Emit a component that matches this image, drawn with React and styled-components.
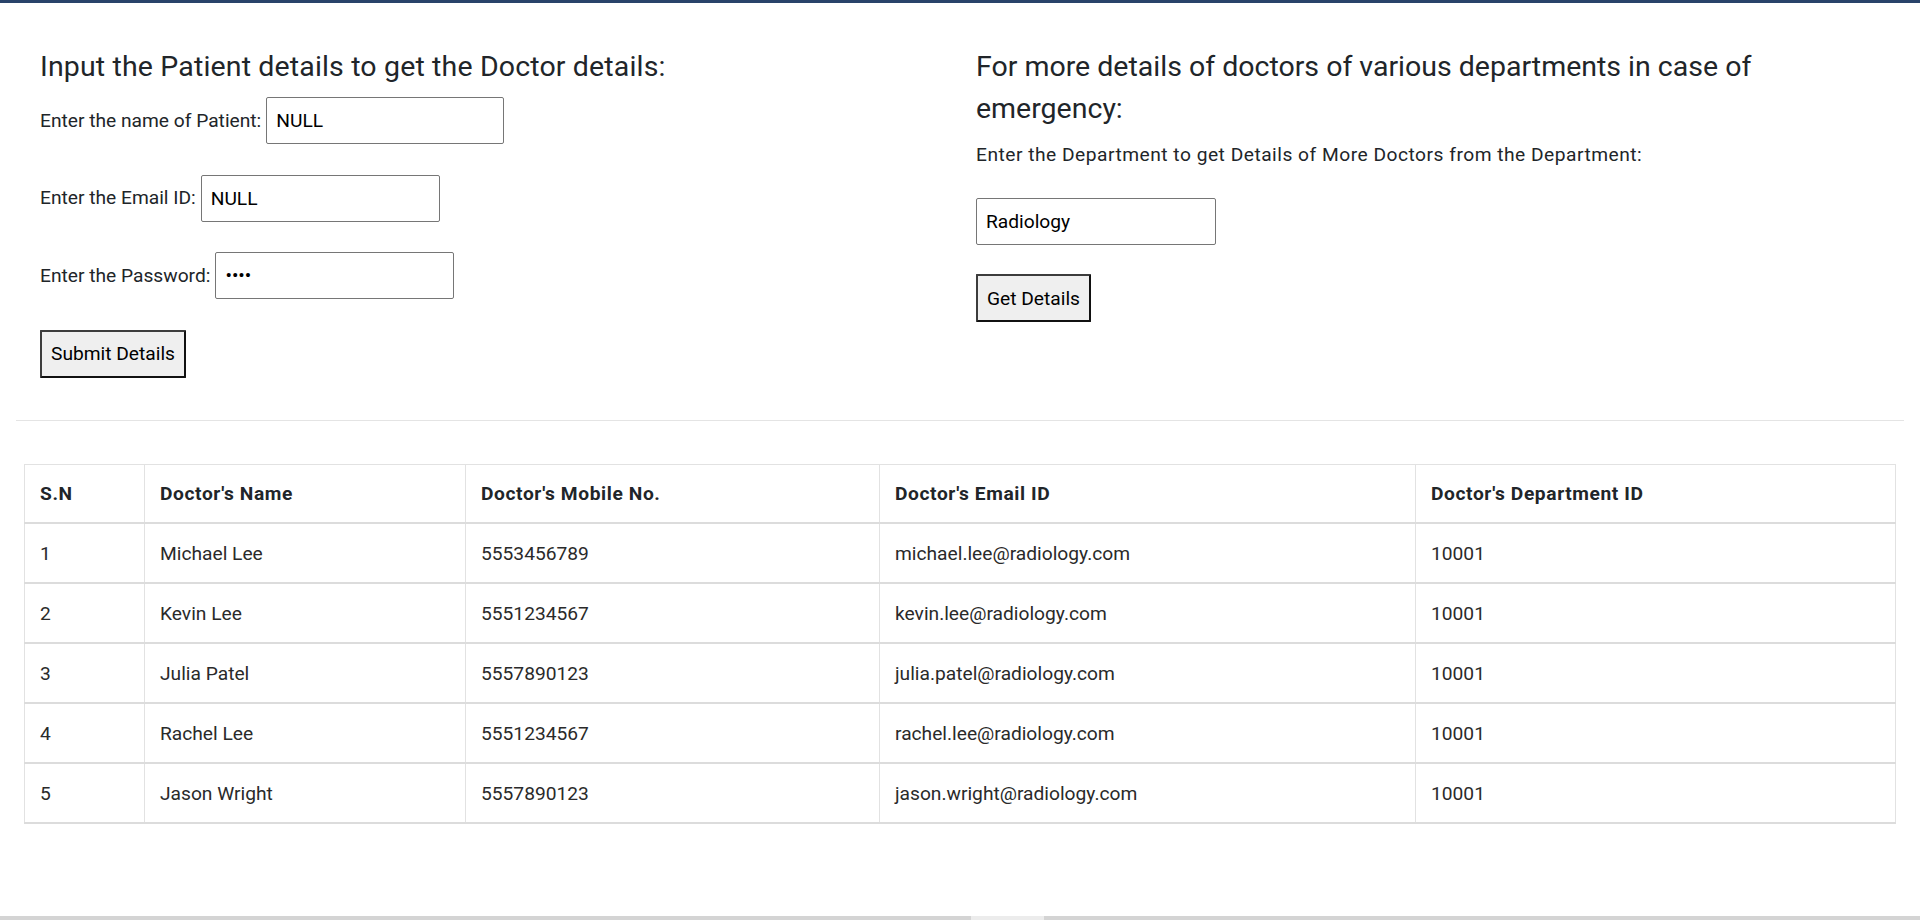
import React from "react";
import styled, { createGlobalStyle } from "styled-components";

const GlobalStyle = createGlobalStyle`
  html, body {
    margin: 0;
    padding: 0;
    background: #fff;
  }
  body {
    font-family: "Segoe UI", Roboto, "Liberation Sans", sans-serif;
    font-size: 19.2px;
    color: #212529;
  }
`;

const doctors = [
  { id: 1, name: "Michael Lee", mobile: "5553456789", email: "michael.lee@radiology.com", dept: "10001" },
  { id: 2, name: "Kevin Lee", mobile: "5551234567", email: "kevin.lee@radiology.com", dept: "10001" },
  { id: 3, name: "Julia Patel", mobile: "5557890123", email: "julia.patel@radiology.com", dept: "10001" },
  { id: 4, name: "Rachel Lee", mobile: "5551234567", email: "rachel.lee@radiology.com", dept: "10001" },
  { id: 5, name: "Jason Wright", mobile: "5557890123", email: "jason.wright@radiology.com", dept: "10001" },
];

const columns = [
  { label: "S.N", width: 120 },
  { label: "Doctor's Name", width: 321 },
  { label: "Doctor's Mobile No.", width: 414 },
  { label: "Doctor's Email ID", width: 536 },
  { label: "Doctor's Department ID" },
];

export default function App() {
  return (
    <>
      <GlobalStyle />
      <Page>
        <Forms>
          <Column $inset={24}>
            <Heading $gap={9} $spacing={0.15}>
              Input the Patient details to get the Doctor details:
            </Heading>
            <FieldList $gap={30.5}>
              <Field>
                Enter the name of Patient:
                <TextInput $w={238} type="text" defaultValue="NULL" />
              </Field>
              <Field>
                Enter the Email ID:
                <TextInput $w={239} type="text" defaultValue="NULL" />
              </Field>
              <Field>
                Enter the Password:
                <TextInput $w={239} type="password" defaultValue="abcd" />
              </Field>
              <Button type="button">Submit Details</Button>
            </FieldList>
          </Column>

          <Column $inset={16}>
            <Heading $gap={10} $spacing={0}>
              For more details of doctors of various departments in case of emergency:
            </Heading>
            <Hint>Enter the Department to get Details of More Doctors from the Department:</Hint>
            <FieldList $gap={29}>
              <TextInput $w={240} type="text" defaultValue="Radiology" />
              <Button type="button">Get Details</Button>
            </FieldList>
          </Column>
        </Forms>

        <Divider />

        <TableWrap>
          <Table>
            <colgroup>
              {columns.map((c) => (
                <col key={c.label} style={c.width ? { width: c.width } : undefined} />
              ))}
            </colgroup>
            <thead>
              <tr>
                {columns.map((c) => (
                  <HeadCell key={c.label}>{c.label}</HeadCell>
                ))}
              </tr>
            </thead>
            <tbody>
              {doctors.map((d) => (
                <tr key={d.id}>
                  <Cell>{d.id}</Cell>
                  <Cell>{d.name}</Cell>
                  <Cell>{d.mobile}</Cell>
                  <Cell>{d.email}</Cell>
                  <Cell>{d.dept}</Cell>
                </tr>
              ))}
            </tbody>
          </Table>
        </TableWrap>

        <ScrollTrack>
          <ScrollThumb />
        </ScrollTrack>
      </Page>
    </>
  );
}

const Page = styled.div`
  box-sizing: border-box;
  min-height: 100vh;
  display: flex;
  flex-direction: column;
  border-top: 3px solid #29436a;
`;

const Forms = styled.section`
  display: grid;
  grid-template-columns: 1fr 1fr;
  padding: 43px 16px 0;
`;

const Column = styled.div`
  display: flex;
  flex-direction: column;
  align-items: flex-start;
  padding-left: ${(p) => p.$inset}px;
`;

const Heading = styled.h3`
  margin: 0 0 ${(p) => p.$gap}px;
  max-width: 880px;
  font-size: 28.5px;
  font-weight: 400;
  line-height: 42px;
  letter-spacing: ${(p) => p.$spacing}px;
  color: #212529;
`;

const Hint = styled.p`
  margin: 0 0 28px;
  line-height: 30px;
  letter-spacing: 0.5px;
`;

const FieldList = styled.div`
  display: flex;
  flex-direction: column;
  align-items: flex-start;
  gap: ${(p) => p.$gap}px;
`;

const Field = styled.label`
  display: flex;
  align-items: center;
  gap: 5px;
  line-height: 30px;
`;

const TextInput = styled.input`
  box-sizing: border-box;
  width: ${(p) => p.$w}px;
  height: 47px;
  padding: 0 9px;
  border: 1px solid #767676;
  border-radius: 2px;
  background: #fff;
  font: inherit;
  color: #000;
  outline: none;
`;

const Button = styled.button`
  box-sizing: border-box;
  height: 48px;
  padding: 0 9px;
  border: 2px solid #111;
  border-top-color: #3c3c3c;
  border-left-color: #3c3c3c;
  border-radius: 1px;
  background: #efefef;
  font: inherit;
  color: #000;
`;

const Divider = styled.hr`
  margin: 42px 16px 0;
  border: 0;
  border-top: 1px solid #e4e4e4;
`;

const TableWrap = styled.div`
  margin: 43px 24px 0;
`;

const Table = styled.table`
  width: 100%;
  table-layout: fixed;
  border-collapse: collapse;
  border: 1px solid #e2e2e2;
`;

const HeadCell = styled.th`
  padding: 14px 15px;
  line-height: 29.5px;
  text-align: left;
  font-weight: 700;
  letter-spacing: 0.6px;
  color: #212529;
  border-left: 1px solid #e2e2e2;
  border-right: 1px solid #e2e2e2;
  border-bottom: 2px solid #dcdcdc;
`;

const Cell = styled.td`
  padding: 14.5px 15px 14px;
  line-height: 29.5px;
  color: #2a2a2a;
  border-left: 1px solid #e2e2e2;
  border-right: 1px solid #e2e2e2;
  border-bottom: 2px solid #dcdcdc;
`;

const ScrollTrack = styled.div`
  margin-top: auto;
  height: 4px;
  padding-left: 971px;
  background: #d4d4d4;
`;

const ScrollThumb = styled.div`
  width: 73px;
  height: 100%;
  background: #ececec;
`;
